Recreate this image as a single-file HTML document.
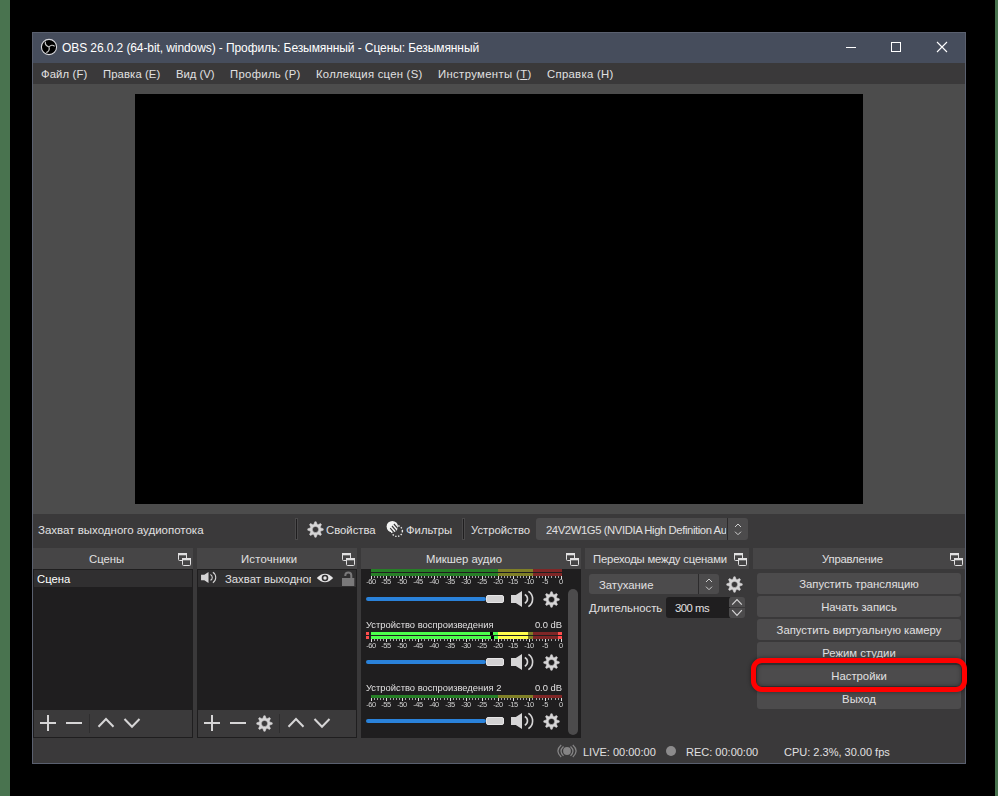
<!DOCTYPE html>
<html><head><meta charset="utf-8">
<style>
*{box-sizing:border-box;margin:0;padding:0}
html,body{width:998px;height:796px;overflow:hidden;background:#000}
body{position:relative;font-family:"Liberation Sans",sans-serif;color:#e1e0e1;font-size:11.3px}
.a{position:absolute;display:block}
.t{position:absolute;white-space:nowrap;line-height:1}
.hdr{position:absolute;top:548px;height:21px;background:#464546}
.btn{position:absolute;left:757px;width:204px;height:21px;background:#4c4b4c;border-radius:3px}
.sm{position:absolute;font-size:7.5px;line-height:1;color:#d0d0d0;white-space:nowrap;letter-spacing:-0.4px;will-change:transform}
</style></head><body>

<div class="a" style="left:0;top:0;width:10px;height:796px;background:#49734f"></div>
<div class="a" style="left:995px;top:0;width:3px;height:796px;background:#49734f"></div>
<div class="a" style="left:32px;top:32px;width:934px;height:732px;background:#5a606f"></div>
<div class="a" style="left:33px;top:33px;width:932px;height:30px;background:#464d5c"></div>
<svg class="a" style="left:38px;top:36px" width="22" height="22" viewBox="0 0 22 22"><circle cx="11" cy="11" r="7.6" fill="#000" stroke="#d8d8dc" stroke-width="1.1"/><path d="M7.4,5.7 C6.9,8.3 8.3,10.1 11,11 C12.3,9.2 14.8,8.4 16.6,10.4 M11,11 C11.7,13.4 10.6,15.6 8.3,16.6" fill="none" stroke="#c8c8c8" stroke-width="1.15"/></svg>
<div class="t" style="left:62px;top:42px;font-size:12px;color:#fff;letter-spacing:-0.09px">OBS 26.0.2 (64-bit, windows) - Профиль: Безымянный - Сцены: Безымянный</div>
<div class="a" style="left:846px;top:47px;width:10px;height:1px;background:#fff"></div>
<div class="a" style="left:891px;top:42px;width:10px;height:10px;border:1px solid #fff"></div>
<svg class="a" style="left:936px;top:41px" width="12" height="12"><path d="M1,1 L11,11 M11,1 L1,11" stroke="#fff" stroke-width="1.1"/></svg>
<div class="a" style="left:33px;top:63px;width:932px;height:21px;background:#3a393a"></div>
<div class="t" style="left:41px;top:68.5px;letter-spacing:0.12px">Файл (F)</div>
<div class="t" style="left:103px;top:68.5px;letter-spacing:0.1px">Правка (E)</div>
<div class="t" style="left:176px;top:68.5px;letter-spacing:0px">Вид (V)</div>
<div class="t" style="left:230px;top:68.5px;letter-spacing:0.33px">Профиль (P)</div>
<div class="t" style="left:316px;top:68.5px;letter-spacing:0.26px">Коллекция сцен (S)</div>
<div class="t" style="left:438px;top:68.5px;letter-spacing:0.37px">Инструменты (<u>T</u>)</div>
<div class="t" style="left:547px;top:68.5px;letter-spacing:0.32px">Справка (H)</div>
<div class="a" style="left:33px;top:84px;width:932px;height:430px;background:#4c4c4c"></div>
<div class="a" style="left:135px;top:94px;width:728px;height:410px;background:#000"></div>
<div class="a" style="left:33px;top:514px;width:932px;height:249px;background:#3a393a"></div>
<div class="t" style="left:38px;top:525px;font-size:11.5px">Захват выходного аудиопотока</div>
<div class="a" style="left:295px;top:518px;width:3px;height:22px;background:#1f1e1f;border:1px solid #4a494a"></div>
<svg class="a" style="left:307px;top:521px" width="17" height="17" viewBox="0 0 17 17"><path d="M6.90,3.24 L7.83,0.73 L9.17,0.73 L10.10,3.24 L11.09,3.65 L13.52,2.53 L14.47,3.48 L13.35,5.91 L13.76,6.90 L16.27,7.83 L16.27,9.17 L13.76,10.10 L13.35,11.09 L14.47,13.52 L13.52,14.47 L11.09,13.35 L10.10,13.76 L9.17,16.27 L7.83,16.27 L6.90,13.76 L5.91,13.35 L3.48,14.47 L2.53,13.52 L3.65,11.09 L3.24,10.10 L0.73,9.17 L0.73,7.83 L3.24,6.90 L3.65,5.91 L2.53,3.48 L3.48,2.53 L5.91,3.65 Z M11.60,8.50 A3.1,3.1 0 1 0 5.40,8.50 A3.1,3.1 0 1 0 11.60,8.50 Z" fill="#d6d5d6" fill-rule="evenodd" stroke="#d6d5d6" stroke-width="0.5" stroke-linejoin="round"/></svg>
<div class="t" style="left:326px;top:525px">Свойства</div>
<svg class="a" style="left:384px;top:518px" width="22" height="22" viewBox="0 0 22 22"><defs><clipPath id="fc"><circle cx="8.3" cy="8.6" r="5.7"/></clipPath></defs><circle cx="13" cy="13" r="5.4" fill="none" stroke="#e8e8e8" stroke-width="1.4" stroke-dasharray="1.4 1.5"/><circle cx="8.3" cy="8.6" r="5.7" fill="#f2f2f2"/><g clip-path="url(#fc)"><path d="M6.2,10.2 L10.4,15 M8,8 L12.2,12.8 M9.9,6 L14.1,10.8" stroke="#3a393a" stroke-width="1.2"/></g></svg>
<div class="t" style="left:406px;top:525px">Фильтры</div>
<div class="a" style="left:462px;top:518px;width:3px;height:22px;background:#1f1e1f;border:1px solid #4a494a"></div>
<div class="t" style="left:471px;top:525px">Устройство</div>
<div class="a" style="left:536px;top:518px;width:212px;height:22px;background:#4c4b4c;border-radius:3px"></div>
<div class="a" style="left:727px;top:518px;width:1px;height:22px;background:#2c2b2c"></div>
<div class="t" style="left:546px;top:525px;width:180px;overflow:hidden;letter-spacing:-0.42px">24V2W1G5 (NVIDIA High Definition Audio)</div>
<svg class="a" style="left:734px;top:523.3px" width="8" height="14"><path d="M1,4 L4,1 L7,4 M1,8.7 L4,11.7 L7,8.7" fill="none" stroke="#cfcfcf" stroke-width="1"/></svg>
<div class="hdr" style="left:33px;width:160px"></div>
<svg class="a" style="left:177px;top:552px" width="16" height="16"><rect x="1.5" y="1.5" width="8" height="7" rx="1" fill="none" stroke="#e1e0e1"/><rect x="1" y="1" width="9" height="2.3" fill="#e1e0e1"/><rect x="5.5" y="6.5" width="8" height="7" rx="1" fill="#464546" stroke="#e1e0e1"/><rect x="5" y="6" width="9" height="2.3" fill="#e1e0e1"/></svg>
<div class="hdr" style="left:197px;width:160px"></div>
<svg class="a" style="left:341px;top:552px" width="16" height="16"><rect x="1.5" y="1.5" width="8" height="7" rx="1" fill="none" stroke="#e1e0e1"/><rect x="1" y="1" width="9" height="2.3" fill="#e1e0e1"/><rect x="5.5" y="6.5" width="8" height="7" rx="1" fill="#464546" stroke="#e1e0e1"/><rect x="5" y="6" width="9" height="2.3" fill="#e1e0e1"/></svg>
<div class="hdr" style="left:361px;width:220px"></div>
<svg class="a" style="left:565px;top:552px" width="16" height="16"><rect x="1.5" y="1.5" width="8" height="7" rx="1" fill="none" stroke="#e1e0e1"/><rect x="1" y="1" width="9" height="2.3" fill="#e1e0e1"/><rect x="5.5" y="6.5" width="8" height="7" rx="1" fill="#464546" stroke="#e1e0e1"/><rect x="5" y="6" width="9" height="2.3" fill="#e1e0e1"/></svg>
<div class="hdr" style="left:585px;width:164px"></div>
<svg class="a" style="left:733px;top:552px" width="16" height="16"><rect x="1.5" y="1.5" width="8" height="7" rx="1" fill="none" stroke="#e1e0e1"/><rect x="1" y="1" width="9" height="2.3" fill="#e1e0e1"/><rect x="5.5" y="6.5" width="8" height="7" rx="1" fill="#464546" stroke="#e1e0e1"/><rect x="5" y="6" width="9" height="2.3" fill="#e1e0e1"/></svg>
<div class="hdr" style="left:753px;width:212px"></div>
<svg class="a" style="left:949px;top:552px" width="16" height="16"><rect x="1.5" y="1.5" width="8" height="7" rx="1" fill="none" stroke="#e1e0e1"/><rect x="1" y="1" width="9" height="2.3" fill="#e1e0e1"/><rect x="5.5" y="6.5" width="8" height="7" rx="1" fill="#464546" stroke="#e1e0e1"/><rect x="5" y="6" width="9" height="2.3" fill="#e1e0e1"/></svg>
<div class="t" style="left:89px;top:554px">Сцены</div>
<div class="t" style="left:241px;top:554px"><span style=letter-spacing:0.2px>Источники</span></div>
<div class="t" style="left:426px;top:554px">Микшер аудио</div>
<div class="t" style="left:593px;top:554px"><span style=letter-spacing:-0.18px>Переходы между сценами</span></div>
<div class="t" style="left:822px;top:554px"><span style=letter-spacing:-0.2px>Управление</span></div>
<div class="a" style="left:33px;top:569px;width:160px;height:141px;background:#1f1e1f"></div>
<div class="a" style="left:34px;top:570px;width:158px;height:17px;background:#302f30"></div>
<div class="t" style="left:37px;top:574px;color:#fff">Сцена</div>
<div class="a" style="left:33px;top:709px;width:160px;height:29px;background:#1f1e1f"></div><div class="a" style="left:34px;top:710px;width:158px;height:27px;background:#3b3a3b"></div>
<svg class="a" style="left:40px;top:715px" width="16" height="16"><path d="M0,8 H16 M8,0 V16" stroke="#d6d5d6" stroke-width="2"/></svg>
<svg class="a" style="left:66px;top:715px" width="16" height="16"><path d="M0,8 H16" stroke="#d6d5d6" stroke-width="2"/></svg>
<div class="a" style="left:89px;top:714px;width:1px;height:19px;background:#2f2e2f"></div>
<svg class="a" style="left:97px;top:715px" width="18" height="16"><path d="M1.5,11.8 L9,4 L16.5,11.8" fill="none" stroke="#d6d5d6" stroke-width="2"/></svg>
<svg class="a" style="left:123px;top:715px" width="18" height="16"><path d="M1.5,4 L9,11.8 L16.5,4" fill="none" stroke="#d6d5d6" stroke-width="2"/></svg>
<div class="a" style="left:197px;top:569px;width:160px;height:141px;background:#1f1e1f"></div>
<div class="a" style="left:198px;top:570px;width:158px;height:17px;background:#302f30"></div>
<svg class="a" style="left:199px;top:570px" width="17.7" height="15.0" viewBox="0 0 26 22"><path d="M3,7 H7.8 L14,3 V19 L7.8,15 H3 Z" fill="#d6d5d6"/><path d="M16.8,6.5 A4.85,4.85 0 0 1 16.8,15.2" fill="none" stroke="#d6d5d6" stroke-width="1.6"/><path d="M20.4,3.3 A9.07,9.07 0 0 1 20.4,18.6" fill="none" stroke="#d6d5d6" stroke-width="1.6"/></svg>
<div class="t" style="left:225px;top:574px;width:86px;overflow:hidden">Захват выходного аудиопотока</div>
<svg class="a" style="left:316px;top:572px" width="18" height="12" viewBox="0 0 18 12"><path d="M0.8,6 Q9,-2.5 17.2,6 Q9,14.5 0.8,6 Z" fill="#e6e5e6"/><circle cx="9" cy="6" r="3.3" fill="#302f30"/><circle cx="9" cy="6" r="1.7" fill="#e6e5e6"/></svg>
<svg class="a" style="left:341px;top:571px" width="14" height="16" viewBox="0 0 14 16"><path d="M4.3,5 V4.5 A3,3 0 0 1 10.3,4.5 V7" fill="none" stroke="#7a797a" stroke-width="2"/><rect x="1" y="7" width="12.3" height="8" fill="#7a797a"/></svg>
<div class="a" style="left:197px;top:709px;width:160px;height:29px;background:#1f1e1f"></div><div class="a" style="left:198px;top:710px;width:158px;height:27px;background:#3b3a3b"></div>
<svg class="a" style="left:204px;top:715px" width="16" height="16"><path d="M0,8 H16 M8,0 V16" stroke="#d6d5d6" stroke-width="2"/></svg>
<svg class="a" style="left:230px;top:715px" width="16" height="16"><path d="M0,8 H16" stroke="#d6d5d6" stroke-width="2"/></svg>
<svg class="a" style="left:256px;top:715px" width="17" height="17" viewBox="0 0 17 17"><path d="M6.90,3.24 L7.83,0.73 L9.17,0.73 L10.10,3.24 L11.09,3.65 L13.52,2.53 L14.47,3.48 L13.35,5.91 L13.76,6.90 L16.27,7.83 L16.27,9.17 L13.76,10.10 L13.35,11.09 L14.47,13.52 L13.52,14.47 L11.09,13.35 L10.10,13.76 L9.17,16.27 L7.83,16.27 L6.90,13.76 L5.91,13.35 L3.48,14.47 L2.53,13.52 L3.65,11.09 L3.24,10.10 L0.73,9.17 L0.73,7.83 L3.24,6.90 L3.65,5.91 L2.53,3.48 L3.48,2.53 L5.91,3.65 Z M11.60,8.50 A3.1,3.1 0 1 0 5.40,8.50 A3.1,3.1 0 1 0 11.60,8.50 Z" fill="#d6d5d6" fill-rule="evenodd" stroke="#d6d5d6" stroke-width="0.5" stroke-linejoin="round"/></svg>
<div class="a" style="left:279px;top:714px;width:1px;height:19px;background:#2f2e2f"></div>
<svg class="a" style="left:287px;top:715px" width="18" height="16"><path d="M1.5,11.8 L9,4 L16.5,11.8" fill="none" stroke="#d6d5d6" stroke-width="2"/></svg>
<svg class="a" style="left:313px;top:715px" width="18" height="16"><path d="M1.5,4 L9,11.8 L16.5,4" fill="none" stroke="#d6d5d6" stroke-width="2"/></svg>
<div class="a" style="left:361px;top:569px;width:220px;height:169px;background:#1f1e1f;overflow:hidden">
<div class="a" style="left:10px;top:0px;width:127px;height:3px;background:#267f26"></div>
<div class="a" style="left:137px;top:0px;width:35px;height:3px;background:#7f7f26"></div>
<div class="a" style="left:172px;top:0px;width:29px;height:3px;background:#7f2626"></div>
<div class="a" style="left:10px;top:4px;width:127px;height:3px;background:#267f26"></div>
<div class="a" style="left:137px;top:4px;width:35px;height:3px;background:#7f7f26"></div>
<div class="a" style="left:172px;top:4px;width:29px;height:3px;background:#7f2626"></div>
<div class="a" style="left:10px;top:7px;width:1px;height:3px;background:#e1e0e1"></div>
<div class="a" style="left:13px;top:7px;width:1px;height:2px;background:#a8a7a8"></div>
<div class="a" style="left:16px;top:7px;width:1px;height:2px;background:#a8a7a8"></div>
<div class="a" style="left:19px;top:7px;width:1px;height:2px;background:#a8a7a8"></div>
<div class="a" style="left:22px;top:7px;width:1px;height:2px;background:#a8a7a8"></div>
<div class="a" style="left:25px;top:7px;width:1px;height:3px;background:#e1e0e1"></div>
<div class="a" style="left:29px;top:7px;width:1px;height:2px;background:#a8a7a8"></div>
<div class="a" style="left:32px;top:7px;width:1px;height:2px;background:#a8a7a8"></div>
<div class="a" style="left:35px;top:7px;width:1px;height:2px;background:#a8a7a8"></div>
<div class="a" style="left:38px;top:7px;width:1px;height:2px;background:#a8a7a8"></div>
<div class="a" style="left:41px;top:7px;width:1px;height:3px;background:#e1e0e1"></div>
<div class="a" style="left:44px;top:7px;width:1px;height:2px;background:#a8a7a8"></div>
<div class="a" style="left:48px;top:7px;width:1px;height:2px;background:#a8a7a8"></div>
<div class="a" style="left:51px;top:7px;width:1px;height:2px;background:#a8a7a8"></div>
<div class="a" style="left:54px;top:7px;width:1px;height:2px;background:#a8a7a8"></div>
<div class="a" style="left:57px;top:7px;width:1px;height:3px;background:#e1e0e1"></div>
<div class="a" style="left:60px;top:7px;width:1px;height:2px;background:#a8a7a8"></div>
<div class="a" style="left:63px;top:7px;width:1px;height:2px;background:#a8a7a8"></div>
<div class="a" style="left:67px;top:7px;width:1px;height:2px;background:#a8a7a8"></div>
<div class="a" style="left:70px;top:7px;width:1px;height:2px;background:#a8a7a8"></div>
<div class="a" style="left:73px;top:7px;width:1px;height:3px;background:#e1e0e1"></div>
<div class="a" style="left:76px;top:7px;width:1px;height:2px;background:#a8a7a8"></div>
<div class="a" style="left:79px;top:7px;width:1px;height:2px;background:#a8a7a8"></div>
<div class="a" style="left:83px;top:7px;width:1px;height:2px;background:#a8a7a8"></div>
<div class="a" style="left:86px;top:7px;width:1px;height:2px;background:#a8a7a8"></div>
<div class="a" style="left:89px;top:7px;width:1px;height:3px;background:#e1e0e1"></div>
<div class="a" style="left:92px;top:7px;width:1px;height:2px;background:#a8a7a8"></div>
<div class="a" style="left:95px;top:7px;width:1px;height:2px;background:#a8a7a8"></div>
<div class="a" style="left:98px;top:7px;width:1px;height:2px;background:#a8a7a8"></div>
<div class="a" style="left:102px;top:7px;width:1px;height:2px;background:#a8a7a8"></div>
<div class="a" style="left:105px;top:7px;width:1px;height:3px;background:#e1e0e1"></div>
<div class="a" style="left:108px;top:7px;width:1px;height:2px;background:#a8a7a8"></div>
<div class="a" style="left:111px;top:7px;width:1px;height:2px;background:#a8a7a8"></div>
<div class="a" style="left:114px;top:7px;width:1px;height:2px;background:#a8a7a8"></div>
<div class="a" style="left:117px;top:7px;width:1px;height:2px;background:#a8a7a8"></div>
<div class="a" style="left:121px;top:7px;width:1px;height:3px;background:#e1e0e1"></div>
<div class="a" style="left:124px;top:7px;width:1px;height:2px;background:#a8a7a8"></div>
<div class="a" style="left:127px;top:7px;width:1px;height:2px;background:#a8a7a8"></div>
<div class="a" style="left:130px;top:7px;width:1px;height:2px;background:#a8a7a8"></div>
<div class="a" style="left:133px;top:7px;width:1px;height:2px;background:#a8a7a8"></div>
<div class="a" style="left:137px;top:7px;width:1px;height:3px;background:#e1e0e1"></div>
<div class="a" style="left:140px;top:7px;width:1px;height:2px;background:#a8a7a8"></div>
<div class="a" style="left:143px;top:7px;width:1px;height:2px;background:#a8a7a8"></div>
<div class="a" style="left:146px;top:7px;width:1px;height:2px;background:#a8a7a8"></div>
<div class="a" style="left:149px;top:7px;width:1px;height:2px;background:#a8a7a8"></div>
<div class="a" style="left:152px;top:7px;width:1px;height:3px;background:#e1e0e1"></div>
<div class="a" style="left:156px;top:7px;width:1px;height:2px;background:#a8a7a8"></div>
<div class="a" style="left:159px;top:7px;width:1px;height:2px;background:#a8a7a8"></div>
<div class="a" style="left:162px;top:7px;width:1px;height:2px;background:#a8a7a8"></div>
<div class="a" style="left:165px;top:7px;width:1px;height:2px;background:#a8a7a8"></div>
<div class="a" style="left:168px;top:7px;width:1px;height:3px;background:#e1e0e1"></div>
<div class="a" style="left:171px;top:7px;width:1px;height:2px;background:#a8a7a8"></div>
<div class="a" style="left:175px;top:7px;width:1px;height:2px;background:#a8a7a8"></div>
<div class="a" style="left:178px;top:7px;width:1px;height:2px;background:#a8a7a8"></div>
<div class="a" style="left:181px;top:7px;width:1px;height:2px;background:#a8a7a8"></div>
<div class="a" style="left:184px;top:7px;width:1px;height:3px;background:#e1e0e1"></div>
<div class="a" style="left:187px;top:7px;width:1px;height:2px;background:#a8a7a8"></div>
<div class="a" style="left:190px;top:7px;width:1px;height:2px;background:#a8a7a8"></div>
<div class="a" style="left:194px;top:7px;width:1px;height:2px;background:#a8a7a8"></div>
<div class="a" style="left:197px;top:7px;width:1px;height:2px;background:#a8a7a8"></div>
<div class="a" style="left:200px;top:7px;width:1px;height:3px;background:#e1e0e1"></div>
<div class="sm" style="left:-5.3px;top:9px;width:30px;text-align:center">-60</div>
<div class="sm" style="left:9.7px;top:9px;width:30px;text-align:center">-55</div>
<div class="sm" style="left:25.7px;top:9px;width:30px;text-align:center">-50</div>
<div class="sm" style="left:41.7px;top:9px;width:30px;text-align:center">-45</div>
<div class="sm" style="left:57.7px;top:9px;width:30px;text-align:center">-40</div>
<div class="sm" style="left:73.7px;top:9px;width:30px;text-align:center">-35</div>
<div class="sm" style="left:89.7px;top:9px;width:30px;text-align:center">-30</div>
<div class="sm" style="left:105.7px;top:9px;width:30px;text-align:center">-25</div>
<div class="sm" style="left:121.7px;top:9px;width:30px;text-align:center">-20</div>
<div class="sm" style="left:136.7px;top:9px;width:30px;text-align:center">-15</div>
<div class="sm" style="left:152.7px;top:9px;width:30px;text-align:center">-10</div>
<div class="sm" style="left:168.7px;top:9px;width:30px;text-align:center">-5</div>
<div class="sm" style="left:184.7px;top:9px;width:30px;text-align:center">0</div>
<div class="a" style="left:5px;top:28px;width:120px;height:4px;background:#2a82da;border-radius:2px"></div>
<div class="a" style="left:125px;top:26px;width:18px;height:8px;background:#d2d1d2;border:1px solid #e6e5e6;border-radius:2px"></div>
<div class="a" style="left:10px;top:63px;width:127px;height:3px;background:#4cff4c"></div>
<div class="a" style="left:137px;top:63px;width:30px;height:3px;background:#ffff4c"></div>
<div class="a" style="left:167px;top:63px;width:5px;height:3px;background:#7f7f26"></div>
<div class="a" style="left:172px;top:63px;width:25px;height:3px;background:#7f2626"></div>
<div class="a" style="left:197px;top:63px;width:4px;height:3px;background:#ff4c4c"></div>
<div class="a" style="left:5px;top:63px;width:3px;height:3px;background:#ff4c4c"></div>
<div class="a" style="left:10px;top:67px;width:127px;height:3px;background:#4cff4c"></div>
<div class="a" style="left:137px;top:67px;width:30px;height:3px;background:#ffff4c"></div>
<div class="a" style="left:167px;top:67px;width:5px;height:3px;background:#7f7f26"></div>
<div class="a" style="left:172px;top:67px;width:25px;height:3px;background:#7f2626"></div>
<div class="a" style="left:197px;top:67px;width:4px;height:3px;background:#ff4c4c"></div>
<div class="a" style="left:5px;top:67px;width:3px;height:3px;background:#ff4c4c"></div>
<div class="a" style="left:129px;top:63px;width:3px;height:3px;background:#000"></div>
<div class="a" style="left:130px;top:67px;width:3px;height:3px;background:#000"></div>
<div class="a" style="left:10px;top:70px;width:1px;height:3px;background:#e1e0e1"></div>
<div class="a" style="left:13px;top:70px;width:1px;height:2px;background:#a8a7a8"></div>
<div class="a" style="left:16px;top:70px;width:1px;height:2px;background:#a8a7a8"></div>
<div class="a" style="left:19px;top:70px;width:1px;height:2px;background:#a8a7a8"></div>
<div class="a" style="left:22px;top:70px;width:1px;height:2px;background:#a8a7a8"></div>
<div class="a" style="left:25px;top:70px;width:1px;height:3px;background:#e1e0e1"></div>
<div class="a" style="left:29px;top:70px;width:1px;height:2px;background:#a8a7a8"></div>
<div class="a" style="left:32px;top:70px;width:1px;height:2px;background:#a8a7a8"></div>
<div class="a" style="left:35px;top:70px;width:1px;height:2px;background:#a8a7a8"></div>
<div class="a" style="left:38px;top:70px;width:1px;height:2px;background:#a8a7a8"></div>
<div class="a" style="left:41px;top:70px;width:1px;height:3px;background:#e1e0e1"></div>
<div class="a" style="left:44px;top:70px;width:1px;height:2px;background:#a8a7a8"></div>
<div class="a" style="left:48px;top:70px;width:1px;height:2px;background:#a8a7a8"></div>
<div class="a" style="left:51px;top:70px;width:1px;height:2px;background:#a8a7a8"></div>
<div class="a" style="left:54px;top:70px;width:1px;height:2px;background:#a8a7a8"></div>
<div class="a" style="left:57px;top:70px;width:1px;height:3px;background:#e1e0e1"></div>
<div class="a" style="left:60px;top:70px;width:1px;height:2px;background:#a8a7a8"></div>
<div class="a" style="left:63px;top:70px;width:1px;height:2px;background:#a8a7a8"></div>
<div class="a" style="left:67px;top:70px;width:1px;height:2px;background:#a8a7a8"></div>
<div class="a" style="left:70px;top:70px;width:1px;height:2px;background:#a8a7a8"></div>
<div class="a" style="left:73px;top:70px;width:1px;height:3px;background:#e1e0e1"></div>
<div class="a" style="left:76px;top:70px;width:1px;height:2px;background:#a8a7a8"></div>
<div class="a" style="left:79px;top:70px;width:1px;height:2px;background:#a8a7a8"></div>
<div class="a" style="left:83px;top:70px;width:1px;height:2px;background:#a8a7a8"></div>
<div class="a" style="left:86px;top:70px;width:1px;height:2px;background:#a8a7a8"></div>
<div class="a" style="left:89px;top:70px;width:1px;height:3px;background:#e1e0e1"></div>
<div class="a" style="left:92px;top:70px;width:1px;height:2px;background:#a8a7a8"></div>
<div class="a" style="left:95px;top:70px;width:1px;height:2px;background:#a8a7a8"></div>
<div class="a" style="left:98px;top:70px;width:1px;height:2px;background:#a8a7a8"></div>
<div class="a" style="left:102px;top:70px;width:1px;height:2px;background:#a8a7a8"></div>
<div class="a" style="left:105px;top:70px;width:1px;height:3px;background:#e1e0e1"></div>
<div class="a" style="left:108px;top:70px;width:1px;height:2px;background:#a8a7a8"></div>
<div class="a" style="left:111px;top:70px;width:1px;height:2px;background:#a8a7a8"></div>
<div class="a" style="left:114px;top:70px;width:1px;height:2px;background:#a8a7a8"></div>
<div class="a" style="left:117px;top:70px;width:1px;height:2px;background:#a8a7a8"></div>
<div class="a" style="left:121px;top:70px;width:1px;height:3px;background:#e1e0e1"></div>
<div class="a" style="left:124px;top:70px;width:1px;height:2px;background:#a8a7a8"></div>
<div class="a" style="left:127px;top:70px;width:1px;height:2px;background:#a8a7a8"></div>
<div class="a" style="left:130px;top:70px;width:1px;height:2px;background:#a8a7a8"></div>
<div class="a" style="left:133px;top:70px;width:1px;height:2px;background:#a8a7a8"></div>
<div class="a" style="left:137px;top:70px;width:1px;height:3px;background:#e1e0e1"></div>
<div class="a" style="left:140px;top:70px;width:1px;height:2px;background:#a8a7a8"></div>
<div class="a" style="left:143px;top:70px;width:1px;height:2px;background:#a8a7a8"></div>
<div class="a" style="left:146px;top:70px;width:1px;height:2px;background:#a8a7a8"></div>
<div class="a" style="left:149px;top:70px;width:1px;height:2px;background:#a8a7a8"></div>
<div class="a" style="left:152px;top:70px;width:1px;height:3px;background:#e1e0e1"></div>
<div class="a" style="left:156px;top:70px;width:1px;height:2px;background:#a8a7a8"></div>
<div class="a" style="left:159px;top:70px;width:1px;height:2px;background:#a8a7a8"></div>
<div class="a" style="left:162px;top:70px;width:1px;height:2px;background:#a8a7a8"></div>
<div class="a" style="left:165px;top:70px;width:1px;height:2px;background:#a8a7a8"></div>
<div class="a" style="left:168px;top:70px;width:1px;height:3px;background:#e1e0e1"></div>
<div class="a" style="left:171px;top:70px;width:1px;height:2px;background:#a8a7a8"></div>
<div class="a" style="left:175px;top:70px;width:1px;height:2px;background:#a8a7a8"></div>
<div class="a" style="left:178px;top:70px;width:1px;height:2px;background:#a8a7a8"></div>
<div class="a" style="left:181px;top:70px;width:1px;height:2px;background:#a8a7a8"></div>
<div class="a" style="left:184px;top:70px;width:1px;height:3px;background:#e1e0e1"></div>
<div class="a" style="left:187px;top:70px;width:1px;height:2px;background:#a8a7a8"></div>
<div class="a" style="left:190px;top:70px;width:1px;height:2px;background:#a8a7a8"></div>
<div class="a" style="left:194px;top:70px;width:1px;height:2px;background:#a8a7a8"></div>
<div class="a" style="left:197px;top:70px;width:1px;height:2px;background:#a8a7a8"></div>
<div class="a" style="left:200px;top:70px;width:1px;height:3px;background:#e1e0e1"></div>
<div class="sm" style="left:-5.3px;top:73px;width:30px;text-align:center">-60</div>
<div class="sm" style="left:9.7px;top:73px;width:30px;text-align:center">-55</div>
<div class="sm" style="left:25.7px;top:73px;width:30px;text-align:center">-50</div>
<div class="sm" style="left:41.7px;top:73px;width:30px;text-align:center">-45</div>
<div class="sm" style="left:57.7px;top:73px;width:30px;text-align:center">-40</div>
<div class="sm" style="left:73.7px;top:73px;width:30px;text-align:center">-35</div>
<div class="sm" style="left:89.7px;top:73px;width:30px;text-align:center">-30</div>
<div class="sm" style="left:105.7px;top:73px;width:30px;text-align:center">-25</div>
<div class="sm" style="left:121.7px;top:73px;width:30px;text-align:center">-20</div>
<div class="sm" style="left:136.7px;top:73px;width:30px;text-align:center">-15</div>
<div class="sm" style="left:152.7px;top:73px;width:30px;text-align:center">-10</div>
<div class="sm" style="left:168.7px;top:73px;width:30px;text-align:center">-5</div>
<div class="sm" style="left:184.7px;top:73px;width:30px;text-align:center">0</div>
<div class="a" style="left:5px;top:91px;width:120px;height:4px;background:#2a82da;border-radius:2px"></div>
<div class="a" style="left:125px;top:89px;width:18px;height:8px;background:#d2d1d2;border:1px solid #e6e5e6;border-radius:2px"></div>
<div class="t" style="left:5px;top:51px;font-size:9.4px">Устройство воспроизведения</div>
<div class="t" style="left:159px;top:51px;width:42px;text-align:right;font-size:9.4px">0.0 dB</div>
<div class="a" style="left:10px;top:126px;width:127px;height:3px;background:#267f26"></div>
<div class="a" style="left:137px;top:126px;width:35px;height:3px;background:#7f7f26"></div>
<div class="a" style="left:172px;top:126px;width:29px;height:3px;background:#7f2626"></div>
<div class="a" style="left:10px;top:129px;width:1px;height:3px;background:#e1e0e1"></div>
<div class="a" style="left:13px;top:129px;width:1px;height:2px;background:#a8a7a8"></div>
<div class="a" style="left:16px;top:129px;width:1px;height:2px;background:#a8a7a8"></div>
<div class="a" style="left:19px;top:129px;width:1px;height:2px;background:#a8a7a8"></div>
<div class="a" style="left:22px;top:129px;width:1px;height:2px;background:#a8a7a8"></div>
<div class="a" style="left:25px;top:129px;width:1px;height:3px;background:#e1e0e1"></div>
<div class="a" style="left:29px;top:129px;width:1px;height:2px;background:#a8a7a8"></div>
<div class="a" style="left:32px;top:129px;width:1px;height:2px;background:#a8a7a8"></div>
<div class="a" style="left:35px;top:129px;width:1px;height:2px;background:#a8a7a8"></div>
<div class="a" style="left:38px;top:129px;width:1px;height:2px;background:#a8a7a8"></div>
<div class="a" style="left:41px;top:129px;width:1px;height:3px;background:#e1e0e1"></div>
<div class="a" style="left:44px;top:129px;width:1px;height:2px;background:#a8a7a8"></div>
<div class="a" style="left:48px;top:129px;width:1px;height:2px;background:#a8a7a8"></div>
<div class="a" style="left:51px;top:129px;width:1px;height:2px;background:#a8a7a8"></div>
<div class="a" style="left:54px;top:129px;width:1px;height:2px;background:#a8a7a8"></div>
<div class="a" style="left:57px;top:129px;width:1px;height:3px;background:#e1e0e1"></div>
<div class="a" style="left:60px;top:129px;width:1px;height:2px;background:#a8a7a8"></div>
<div class="a" style="left:63px;top:129px;width:1px;height:2px;background:#a8a7a8"></div>
<div class="a" style="left:67px;top:129px;width:1px;height:2px;background:#a8a7a8"></div>
<div class="a" style="left:70px;top:129px;width:1px;height:2px;background:#a8a7a8"></div>
<div class="a" style="left:73px;top:129px;width:1px;height:3px;background:#e1e0e1"></div>
<div class="a" style="left:76px;top:129px;width:1px;height:2px;background:#a8a7a8"></div>
<div class="a" style="left:79px;top:129px;width:1px;height:2px;background:#a8a7a8"></div>
<div class="a" style="left:83px;top:129px;width:1px;height:2px;background:#a8a7a8"></div>
<div class="a" style="left:86px;top:129px;width:1px;height:2px;background:#a8a7a8"></div>
<div class="a" style="left:89px;top:129px;width:1px;height:3px;background:#e1e0e1"></div>
<div class="a" style="left:92px;top:129px;width:1px;height:2px;background:#a8a7a8"></div>
<div class="a" style="left:95px;top:129px;width:1px;height:2px;background:#a8a7a8"></div>
<div class="a" style="left:98px;top:129px;width:1px;height:2px;background:#a8a7a8"></div>
<div class="a" style="left:102px;top:129px;width:1px;height:2px;background:#a8a7a8"></div>
<div class="a" style="left:105px;top:129px;width:1px;height:3px;background:#e1e0e1"></div>
<div class="a" style="left:108px;top:129px;width:1px;height:2px;background:#a8a7a8"></div>
<div class="a" style="left:111px;top:129px;width:1px;height:2px;background:#a8a7a8"></div>
<div class="a" style="left:114px;top:129px;width:1px;height:2px;background:#a8a7a8"></div>
<div class="a" style="left:117px;top:129px;width:1px;height:2px;background:#a8a7a8"></div>
<div class="a" style="left:121px;top:129px;width:1px;height:3px;background:#e1e0e1"></div>
<div class="a" style="left:124px;top:129px;width:1px;height:2px;background:#a8a7a8"></div>
<div class="a" style="left:127px;top:129px;width:1px;height:2px;background:#a8a7a8"></div>
<div class="a" style="left:130px;top:129px;width:1px;height:2px;background:#a8a7a8"></div>
<div class="a" style="left:133px;top:129px;width:1px;height:2px;background:#a8a7a8"></div>
<div class="a" style="left:137px;top:129px;width:1px;height:3px;background:#e1e0e1"></div>
<div class="a" style="left:140px;top:129px;width:1px;height:2px;background:#a8a7a8"></div>
<div class="a" style="left:143px;top:129px;width:1px;height:2px;background:#a8a7a8"></div>
<div class="a" style="left:146px;top:129px;width:1px;height:2px;background:#a8a7a8"></div>
<div class="a" style="left:149px;top:129px;width:1px;height:2px;background:#a8a7a8"></div>
<div class="a" style="left:152px;top:129px;width:1px;height:3px;background:#e1e0e1"></div>
<div class="a" style="left:156px;top:129px;width:1px;height:2px;background:#a8a7a8"></div>
<div class="a" style="left:159px;top:129px;width:1px;height:2px;background:#a8a7a8"></div>
<div class="a" style="left:162px;top:129px;width:1px;height:2px;background:#a8a7a8"></div>
<div class="a" style="left:165px;top:129px;width:1px;height:2px;background:#a8a7a8"></div>
<div class="a" style="left:168px;top:129px;width:1px;height:3px;background:#e1e0e1"></div>
<div class="a" style="left:171px;top:129px;width:1px;height:2px;background:#a8a7a8"></div>
<div class="a" style="left:175px;top:129px;width:1px;height:2px;background:#a8a7a8"></div>
<div class="a" style="left:178px;top:129px;width:1px;height:2px;background:#a8a7a8"></div>
<div class="a" style="left:181px;top:129px;width:1px;height:2px;background:#a8a7a8"></div>
<div class="a" style="left:184px;top:129px;width:1px;height:3px;background:#e1e0e1"></div>
<div class="a" style="left:187px;top:129px;width:1px;height:2px;background:#a8a7a8"></div>
<div class="a" style="left:190px;top:129px;width:1px;height:2px;background:#a8a7a8"></div>
<div class="a" style="left:194px;top:129px;width:1px;height:2px;background:#a8a7a8"></div>
<div class="a" style="left:197px;top:129px;width:1px;height:2px;background:#a8a7a8"></div>
<div class="a" style="left:200px;top:129px;width:1px;height:3px;background:#e1e0e1"></div>
<div class="sm" style="left:-5.3px;top:132px;width:30px;text-align:center">-60</div>
<div class="sm" style="left:9.7px;top:132px;width:30px;text-align:center">-55</div>
<div class="sm" style="left:25.7px;top:132px;width:30px;text-align:center">-50</div>
<div class="sm" style="left:41.7px;top:132px;width:30px;text-align:center">-45</div>
<div class="sm" style="left:57.7px;top:132px;width:30px;text-align:center">-40</div>
<div class="sm" style="left:73.7px;top:132px;width:30px;text-align:center">-35</div>
<div class="sm" style="left:89.7px;top:132px;width:30px;text-align:center">-30</div>
<div class="sm" style="left:105.7px;top:132px;width:30px;text-align:center">-25</div>
<div class="sm" style="left:121.7px;top:132px;width:30px;text-align:center">-20</div>
<div class="sm" style="left:136.7px;top:132px;width:30px;text-align:center">-15</div>
<div class="sm" style="left:152.7px;top:132px;width:30px;text-align:center">-10</div>
<div class="sm" style="left:168.7px;top:132px;width:30px;text-align:center">-5</div>
<div class="sm" style="left:184.7px;top:132px;width:30px;text-align:center">0</div>
<div class="a" style="left:5px;top:150px;width:120px;height:4px;background:#2a82da;border-radius:2px"></div>
<div class="a" style="left:125px;top:148px;width:18px;height:8px;background:#d2d1d2;border:1px solid #e6e5e6;border-radius:2px"></div>
<div class="t" style="left:5px;top:114px;font-size:9.4px">Устройство воспроизведения 2</div>
<div class="t" style="left:159px;top:114px;width:42px;text-align:right;font-size:9.4px">0.0 dB</div>
<div class="a" style="left:207px;top:20px;width:10px;height:146px;background:#4c4b4c;border-radius:5px"></div>
</div>
<svg class="a" style="left:508px;top:588px" width="26.0" height="22.0" viewBox="0 0 26 22"><path d="M3,7 H7.8 L14,3 V19 L7.8,15 H3 Z" fill="#d6d5d6"/><path d="M16.8,6.5 A4.85,4.85 0 0 1 16.8,15.2" fill="none" stroke="#d6d5d6" stroke-width="1.6"/><path d="M20.4,3.3 A9.07,9.07 0 0 1 20.4,18.6" fill="none" stroke="#d6d5d6" stroke-width="1.6"/></svg>
<svg class="a" style="left:543px;top:591px" width="17" height="17" viewBox="0 0 17 17"><path d="M6.90,3.24 L7.83,0.73 L9.17,0.73 L10.10,3.24 L11.09,3.65 L13.52,2.53 L14.47,3.48 L13.35,5.91 L13.76,6.90 L16.27,7.83 L16.27,9.17 L13.76,10.10 L13.35,11.09 L14.47,13.52 L13.52,14.47 L11.09,13.35 L10.10,13.76 L9.17,16.27 L7.83,16.27 L6.90,13.76 L5.91,13.35 L3.48,14.47 L2.53,13.52 L3.65,11.09 L3.24,10.10 L0.73,9.17 L0.73,7.83 L3.24,6.90 L3.65,5.91 L2.53,3.48 L3.48,2.53 L5.91,3.65 Z M11.60,8.50 A3.1,3.1 0 1 0 5.40,8.50 A3.1,3.1 0 1 0 11.60,8.50 Z" fill="#d6d5d6" fill-rule="evenodd" stroke="#d6d5d6" stroke-width="0.5" stroke-linejoin="round"/></svg>
<svg class="a" style="left:508px;top:651px" width="26.0" height="22.0" viewBox="0 0 26 22"><path d="M3,7 H7.8 L14,3 V19 L7.8,15 H3 Z" fill="#d6d5d6"/><path d="M16.8,6.5 A4.85,4.85 0 0 1 16.8,15.2" fill="none" stroke="#d6d5d6" stroke-width="1.6"/><path d="M20.4,3.3 A9.07,9.07 0 0 1 20.4,18.6" fill="none" stroke="#d6d5d6" stroke-width="1.6"/></svg>
<svg class="a" style="left:543px;top:654px" width="17" height="17" viewBox="0 0 17 17"><path d="M6.90,3.24 L7.83,0.73 L9.17,0.73 L10.10,3.24 L11.09,3.65 L13.52,2.53 L14.47,3.48 L13.35,5.91 L13.76,6.90 L16.27,7.83 L16.27,9.17 L13.76,10.10 L13.35,11.09 L14.47,13.52 L13.52,14.47 L11.09,13.35 L10.10,13.76 L9.17,16.27 L7.83,16.27 L6.90,13.76 L5.91,13.35 L3.48,14.47 L2.53,13.52 L3.65,11.09 L3.24,10.10 L0.73,9.17 L0.73,7.83 L3.24,6.90 L3.65,5.91 L2.53,3.48 L3.48,2.53 L5.91,3.65 Z M11.60,8.50 A3.1,3.1 0 1 0 5.40,8.50 A3.1,3.1 0 1 0 11.60,8.50 Z" fill="#d6d5d6" fill-rule="evenodd" stroke="#d6d5d6" stroke-width="0.5" stroke-linejoin="round"/></svg>
<svg class="a" style="left:508px;top:710px" width="26.0" height="22.0" viewBox="0 0 26 22"><path d="M3,7 H7.8 L14,3 V19 L7.8,15 H3 Z" fill="#d6d5d6"/><path d="M16.8,6.5 A4.85,4.85 0 0 1 16.8,15.2" fill="none" stroke="#d6d5d6" stroke-width="1.6"/><path d="M20.4,3.3 A9.07,9.07 0 0 1 20.4,18.6" fill="none" stroke="#d6d5d6" stroke-width="1.6"/></svg>
<svg class="a" style="left:543px;top:713px" width="17" height="17" viewBox="0 0 17 17"><path d="M6.90,3.24 L7.83,0.73 L9.17,0.73 L10.10,3.24 L11.09,3.65 L13.52,2.53 L14.47,3.48 L13.35,5.91 L13.76,6.90 L16.27,7.83 L16.27,9.17 L13.76,10.10 L13.35,11.09 L14.47,13.52 L13.52,14.47 L11.09,13.35 L10.10,13.76 L9.17,16.27 L7.83,16.27 L6.90,13.76 L5.91,13.35 L3.48,14.47 L2.53,13.52 L3.65,11.09 L3.24,10.10 L0.73,9.17 L0.73,7.83 L3.24,6.90 L3.65,5.91 L2.53,3.48 L3.48,2.53 L5.91,3.65 Z M11.60,8.50 A3.1,3.1 0 1 0 5.40,8.50 A3.1,3.1 0 1 0 11.60,8.50 Z" fill="#d6d5d6" fill-rule="evenodd" stroke="#d6d5d6" stroke-width="0.5" stroke-linejoin="round"/></svg>
<div class="a" style="left:589px;top:574px;width:130px;height:20px;background:#4c4b4c;border-radius:3px"></div>
<div class="a" style="left:698px;top:574px;width:1px;height:20px;background:#2c2b2c"></div>
<svg class="a" style="left:705px;top:578.3px" width="8" height="14"><path d="M1,4 L4,1 L7,4 M1,8.7 L4,11.7 L7,8.7" fill="none" stroke="#cfcfcf" stroke-width="1"/></svg>
<div class="t" style="left:599px;top:580px">Затухание</div>
<svg class="a" style="left:726px;top:576px" width="17" height="17" viewBox="0 0 17 17"><path d="M6.90,3.24 L7.83,0.73 L9.17,0.73 L10.10,3.24 L11.09,3.65 L13.52,2.53 L14.47,3.48 L13.35,5.91 L13.76,6.90 L16.27,7.83 L16.27,9.17 L13.76,10.10 L13.35,11.09 L14.47,13.52 L13.52,14.47 L11.09,13.35 L10.10,13.76 L9.17,16.27 L7.83,16.27 L6.90,13.76 L5.91,13.35 L3.48,14.47 L2.53,13.52 L3.65,11.09 L3.24,10.10 L0.73,9.17 L0.73,7.83 L3.24,6.90 L3.65,5.91 L2.53,3.48 L3.48,2.53 L5.91,3.65 Z M11.60,8.50 A3.1,3.1 0 1 0 5.40,8.50 A3.1,3.1 0 1 0 11.60,8.50 Z" fill="#d6d5d6" fill-rule="evenodd" stroke="#d6d5d6" stroke-width="0.5" stroke-linejoin="round"/></svg>
<div class="t" style="left:589px;top:603px">Длительность</div>
<div class="a" style="left:666px;top:597px;width:64px;height:21px;background:#1f1e1f;border-radius:3px 0 0 3px"></div>
<div class="t" style="left:675px;top:603px;letter-spacing:-0.5px">300 ms</div>
<div class="a" style="left:729px;top:597px;width:16px;height:10px;background:#4c4b4c;border-radius:3px 3px 0 0"></div>
<div class="a" style="left:729px;top:608px;width:16px;height:10px;background:#4c4b4c;border-radius:0 0 3px 3px"></div>
<svg class="a" style="left:729px;top:597px" width="16" height="21"><path d="M3.2,7.6 L8,2.7 L12.8,7.6 M3.2,13.2 L8,18.4 L12.8,13.2" fill="none" stroke="#d6d5d6" stroke-width="1.2"/></svg>
<div class="btn" style="top:573px"></div>
<div class="t" style="left:757px;width:204px;text-align:center;top:579px">Запустить трансляцию</div>
<div class="btn" style="top:596px"></div>
<div class="t" style="left:757px;width:204px;text-align:center;top:602px">Начать запись</div>
<div class="btn" style="top:619px"></div>
<div class="t" style="left:757px;width:204px;text-align:center;top:625px">Запустить виртуальную камеру</div>
<div class="btn" style="top:642px"></div>
<div class="t" style="left:757px;width:204px;text-align:center;top:648px">Режим студии</div>
<div class="btn" style="top:665px"></div>
<div class="t" style="left:757px;width:204px;text-align:center;top:671px">Настройки</div>
<div class="btn" style="top:688px"></div>
<div class="t" style="left:757px;width:204px;text-align:center;top:694px">Выход</div>
<svg class="a" style="left:554px;top:740px" width="26" height="22" viewBox="0 0 26 22"><circle cx="13" cy="11" r="3.9" fill="#858485"/><path d="M9.5,6.4 Q4.5,11 9.5,15.9 M7.2,5 Q0.6,11 7.2,16.9 M16.5,6.4 Q21.5,11 16.5,15.9 M18.8,5 Q25.4,11 18.8,16.9" fill="none" stroke="#858485" stroke-width="1.3"/></svg>
<div class="t" style="left:583px;top:747px;font-size:11px">LIVE: 00:00:00</div>
<div class="a" style="left:666px;top:746px;width:10px;height:10px;border-radius:50%;background:#8c8b8c"></div>
<div class="t" style="left:686px;top:747px;font-size:11px">REC: 00:00:00</div>
<div class="t" style="left:784px;top:747px;font-size:11px">CPU: 2.3%, 30.00 fps</div>
<div class="a" style="left:751px;top:658px;width:216px;height:34px;border:5px solid #f00;border-radius:11px;box-shadow:0 0 4px rgba(0,0,0,.45), inset 0 0 5px rgba(0,0,0,.5)"></div>
</body></html>
